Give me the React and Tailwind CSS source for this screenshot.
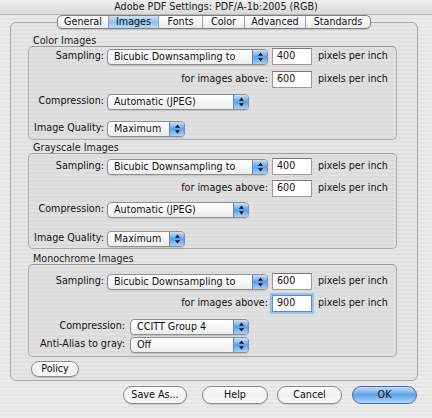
import React from 'react';

const Arrows = () => (
  <svg width="7" height="10" viewBox="0 0 7 10">
    <path d="M3.5 0.5 L6 3.8 L1 3.8 Z" fill="#111" />
    <path d="M3.5 9.5 L6 6.2 L1 6.2 Z" fill="#111" />
  </svg>
);

const Popup = ({ value, width }) => (
  <div
    className={`flex h-[16px] items-stretch overflow-hidden rounded-[4px] border border-[#8e8e8e] bg-gradient-to-b from-white via-[#f7f7f7] to-[#ececec] shadow-[0_1px_1px_rgba(0,0,0,0.12)] ${width}`}
  >
    <span className="flex flex-1 items-center pl-[6px] leading-none text-[#111]">{value}</span>
    <span className="flex w-[15px] items-center justify-center border-l border-[#5c86bf] bg-gradient-to-b from-[#c9e2fb] via-[#5b9de8] to-[#a9d2f8]">
      <Arrows />
    </span>
  </div>
);

const Field = ({ value, focused }) => (
  <div
    className={
      focused
        ? 'flex h-[17px] w-[40px] items-center border border-[#5a8bd0] bg-white pl-[4px] shadow-[0_0_0_2px_#9dc0ec] text-[#111]'
        : 'flex h-[17px] w-[40px] items-center border border-[#9a9a9a] border-t-[#7a7a7a] bg-white pl-[4px] text-[#111]'
    }
  >
    {value}
  </div>
);

const SamplingRows = ({ sample, above, focused, gap }) => (
  <>
    <div className="flex h-[17px] items-center">
      <span className="w-[75px] text-right">Sampling:</span>
      <div className="ml-[3px]">
        <Popup value="Bicubic Downsampling to" width="w-[161px]" />
      </div>
      <div className="ml-[4px]">
        <Field value={sample} />
      </div>
      <span className="ml-[6px]">pixels per inch</span>
    </div>
    <div className={`flex h-[17px] items-center ${gap}`}>
      <span className="w-[239px] text-right">for images above:</span>
      <div className="ml-[4px]">
        <Field value={above} focused={focused} />
      </div>
      <span className="ml-[6px]">pixels per inch</span>
    </div>
  </>
);

const Group = ({ children, className }) => (
  <div
    className={`ml-[17px] w-[369px] rounded-[5px] border border-[#ababab] border-t-[#9c9c9c] bg-[#dfdfdf] bg-[repeating-linear-gradient(to_bottom,#e1e1e1_0px,#e1e1e1_2px,#dbdbdb_2px,#dbdbdb_4px)] ${className}`}
  >
    {children}
  </div>
);

const GroupLabel = ({ children, className }) => (
  <div className={`ml-[22px] h-[11px] leading-[11px] text-[#222] ${className}`}>{children}</div>
);

const tabs = [
  { label: 'General', w: 'w-[50px]' },
  { label: 'Images', w: 'w-[50px]', active: true },
  { label: 'Fonts', w: 'w-[44px]' },
  { label: 'Color', w: 'w-[42px]' },
  { label: 'Advanced', w: 'w-[61px]' },
  { label: 'Standards', w: 'w-[65px]' },
];

const Button = ({ label, w, primary }) => (
  <div
    className={
      primary
        ? `flex h-[18px] items-center justify-center rounded-full border border-[#3f6fb0] bg-gradient-to-b from-[#c3defa] via-[#5d9fe9] to-[#b7dafb] text-[#111] ${w}`
        : `flex h-[18px] items-center justify-center rounded-full border border-[#8a8a8a] bg-gradient-to-b from-white via-[#f0f0f0] to-[#fafafa] text-[#111] shadow-[0_1px_1px_rgba(0,0,0,0.15)] ${w}`
    }
  >
    {label}
  </div>
);

export default function App() {
  return (
    <div className="h-[418px] w-[432px] overflow-hidden bg-[#e8e8e8] bg-[repeating-linear-gradient(to_bottom,#ececec_0px,#ececec_2px,#e5e5e5_2px,#e5e5e5_4px)] font-['DejaVu_Sans',sans-serif] text-[9.6px] text-[#111]">
      {/* title bar */}
      <div className="flex h-[15px] items-center justify-center border-b border-[#b9b9b9] bg-gradient-to-b from-[#efefef] to-[#d9d9d9] text-[#222]">
        Adobe PDF Settings: PDF/A-1b:2005 (RGB)
      </div>

      {/* tab panel */}
      <div className="ml-[10px] mt-[7px] h-[359px] w-[408px] rounded-[6px] border border-[#a6a6a6] bg-[repeating-linear-gradient(to_bottom,#e6e6e6_0px,#e6e6e6_2px,#e0e0e0_2px,#e0e0e0_4px)]">
        <div className="-mt-[8px] flex justify-center">
          <div className="flex h-[14px] overflow-hidden rounded-[5px] border border-[#7f7f7f] bg-gradient-to-b from-white via-[#f6f6f6] to-[#e9e9e9] shadow-[0_1px_1px_rgba(0,0,0,0.15)]">
            {tabs.map((t, i) => (
              <div
                key={t.label}
                className={`flex items-center justify-center leading-none ${t.w} ${i > 0 ? 'border-l border-[#a0a0a0]' : ''} ${
                  t.active ? 'bg-gradient-to-b from-[#cfe5fb] via-[#8ec0f1] to-[#b9dbfa]' : ''
                }`}
              >
                {t.label}
              </div>
            ))}
          </div>
        </div>

        {/* Color Images */}
        <GroupLabel className="mt-[6px]">Color Images</GroupLabel>
        <Group className="pb-[2px] pt-[1px]">
          <SamplingRows sample="400" above="600" gap="mt-[6px]" />
          <div className="mt-[5px] flex h-[17px] items-center">
            <span className="w-[75px] text-right">Compression:</span>
            <div className="ml-[3px]">
              <Popup value="Automatic (JPEG)" width="w-[142px]" />
            </div>
          </div>
          <div className="mt-[10px] flex h-[17px] items-center">
            <span className="w-[75px] text-right">Image Quality:</span>
            <div className="ml-[3px]">
              <Popup value="Maximum" width="w-[78px]" />
            </div>
          </div>
        </Group>

        {/* Grayscale Images */}
        <GroupLabel className="mt-[2px]">Grayscale Images</GroupLabel>
        <Group className="pb-[1px] pt-[4px]">
          <SamplingRows sample="400" above="600" gap="mt-[5px]" />
          <div className="mt-[4px] flex h-[17px] items-center">
            <span className="w-[75px] text-right">Compression:</span>
            <div className="ml-[3px]">
              <Popup value="Automatic (JPEG)" width="w-[142px]" />
            </div>
          </div>
          <div className="mt-[12px] flex h-[17px] items-center">
            <span className="w-[75px] text-right">Image Quality:</span>
            <div className="ml-[3px]">
              <Popup value="Maximum" width="w-[78px]" />
            </div>
          </div>
        </Group>

        {/* Monochrome Images */}
        <GroupLabel className="mt-[4px]">Monochrome Images</GroupLabel>
        <Group className="pb-[3px] pt-[8px]">
          <SamplingRows sample="600" above="900" focused gap="mt-[5px]" />
          <div className="mt-[6px] flex h-[17px] items-center">
            <span className="w-[96px] text-right">Compression:</span>
            <div className="ml-[5px]">
              <Popup value="CCITT Group 4" width="w-[119px]" />
            </div>
          </div>
          <div className="mt-[1px] flex h-[17px] items-center">
            <span className="w-[96px] text-right">Anti-Alias to gray:</span>
            <div className="ml-[5px]">
              <Popup value="Off" width="w-[119px]" />
            </div>
          </div>
        </Group>

        <div className="ml-[20px] mt-[4px] flex">
          <div className="flex h-[16px] w-[48px] items-center justify-center rounded-full border border-[#8a8a8a] bg-gradient-to-b from-white via-[#f0f0f0] to-[#fafafa] shadow-[0_1px_1px_rgba(0,0,0,0.15)]">
            Policy
          </div>
        </div>
      </div>

      {/* bottom buttons */}
      <div className="ml-[123px] mt-[5px] flex">
        <Button label="Save As..." w="w-[64px]" />
        <div className="ml-[15px]">
          <Button label="Help" w="w-[66px]" />
        </div>
        <div className="ml-[9px]">
          <Button label="Cancel" w="w-[65px]" />
        </div>
        <div className="ml-[10px]">
          <Button label="OK" w="w-[65px]" primary />
        </div>
      </div>
    </div>
  );
}
